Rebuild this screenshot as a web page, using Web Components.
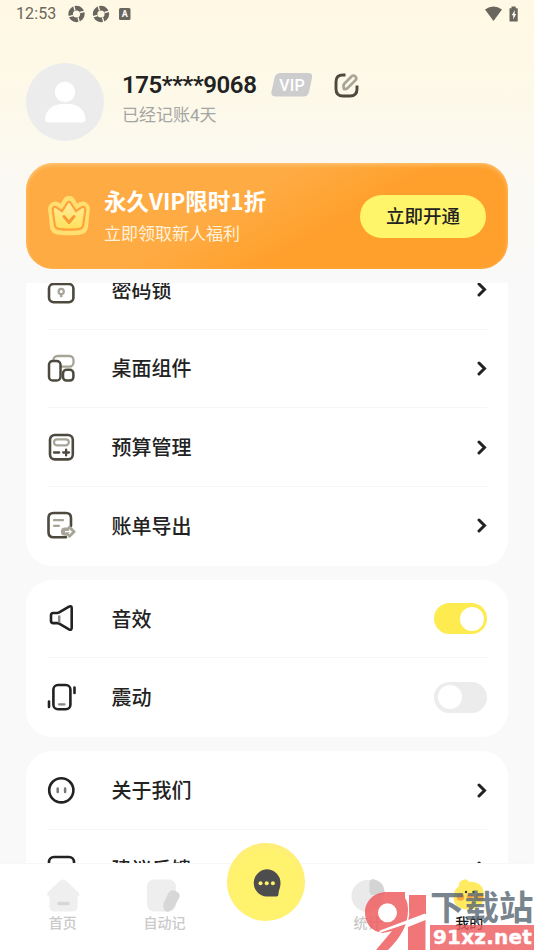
<!DOCTYPE html>
<html lang="zh-CN">
<head>
<meta charset="utf-8">
<title>我的</title>
<style>
html,body{margin:0;height:100%;overflow:hidden}
body{font-family:Roboto,"Noto Sans CJK SC",sans-serif;color:#222;background:#f9f9f9}
</style>
</head>
<body>
<profile-page></profile-page>
<script>
const define = (name, html) => customElements.define(name, class extends HTMLElement {
  constructor() {
    super();
    this.attachShadow({ mode: 'open' }).innerHTML = typeof html === 'function' ? html(this) : html;
  }
});

const D = '#4d493f', G = '#a7a498', K = '#222';
const icons = {
  lock: `<rect x="2" y="9" width="24.4" height="18.2" rx="4.6" fill="#fff" stroke="${D}" stroke-width="2.6"/><circle cx="14.200" cy="16.400" r="2.600" fill="none" stroke="${G}" stroke-width="2.200"/><path d="M14.200 19v3.200" stroke="${G}" stroke-width="2.600"/>`,
  widget: `<rect x="6.500" y="2" width="20" height="10.600" rx="4" fill="none" stroke="${G}" stroke-width="2.300"/><rect x="2" y="7" width="11.500" height="19.600" rx="3.800" fill="#fff" stroke="${D}" stroke-width="2.500"/><rect x="16" y="15.800" width="10.400" height="10.800" rx="3.600" fill="#fff" stroke="${D}" stroke-width="2.500"/>`,
  calc: `<rect x="3" y="2" width="22.800" height="24.400" rx="4.800" fill="none" stroke="${D}" stroke-width="2.600"/><rect x="7" y="6.300" width="14.800" height="6" rx="3" fill="none" stroke="${G}" stroke-width="2.200"/><path d="M7 19.500h5.200M16.200 19.500h5.800M19.100 16.600v5.800" stroke="${D}" stroke-width="2.300" stroke-linecap="round"/>`,
  export: `<path d="M24 15V7q0-5-5-5H6.500Q1.500 2 1.500 7v14.200q0 5 5 5H19" fill="none" stroke="${D}" stroke-width="2.600" stroke-linecap="round"/><path d="M7 9.200h9M7 14.800h5" stroke="${G}" stroke-width="2.200" stroke-linecap="round"/><path d="M22.500 15.800l5 4.900-5 4.900-1.500-1.900H18a3 3 0 0 1 0-6h3z" fill="${G}" stroke="${G}" stroke-width="2.200" stroke-linejoin="round"/><path d="M18 20.700h6M22 18.700l2.200 2-2.200 2" fill="none" stroke="#fff" stroke-width="1.300"/>`,
  sound: `<path d="M4 11.200Q4 9 6.200 9h4q1 0 2-.6L22 2.700q2.700-1.400 2.700 1.500v19.600q0 2.900-2.700 1.500L12.200 19.700q-1-.6-2-.6h-4Q4 19.100 4 17z" fill="none" stroke="${K}" stroke-width="2.600" stroke-linejoin="round"/><path d="M12.200 11.500v7" stroke="#888" stroke-width="2.500"/>`,
  shake: `<rect x="6.400" y="2" width="17" height="24.300" rx="4.600" fill="none" stroke="${K}" stroke-width="2.600"/><path d="M12 21.300h5.500" stroke="#888" stroke-width="2.200" stroke-linecap="round"/><path d="M2 18.500v5.500M27.500 4.500v5.500" stroke="${K}" stroke-width="2.600" stroke-linecap="round"/>`,
  about: `<circle cx="14.300" cy="14.300" r="12.100" fill="none" stroke="${K}" stroke-width="2.600"/><path d="M10.700 12.500v3.600M18.100 12.500v3.600" stroke="#777" stroke-width="2.500" stroke-linecap="round"/>`,
  feedback: `<rect x="2" y="3" width="25" height="23" rx="5" fill="none" stroke="${K}" stroke-width="2.600"/>`
};
define('row-icon', el => `<style>:host{display:block;width:29px;height:29px}svg{display:block}</style>
<svg width="29" height="29" viewBox="0 0 29 29">${icons[el.getAttribute('name')]}</svg>`);

define('chevron-icon', `<style>:host{display:block;width:10px;height:15px}svg{display:block}</style>
<svg width="10" height="15"><path d="M2 2L7.500 7.500 2 13" fill="none" stroke="#222" stroke-width="3" stroke-linecap="round" stroke-linejoin="miter"/></svg>`);

define('toggle-switch', `<style>
:host{display:flex;box-sizing:border-box;width:53px;height:31px;border-radius:16px;padding:3.500px;background:#ececec}
:host([on]){background:#fdeb50;justify-content:flex-end}
i{width:24px;height:24px;border-radius:50%;background:#fff}
</style><i></i>`);

define('setting-row', el => `<style>
:host{display:flex;align-items:center;height:78.700px;box-sizing:border-box;border-bottom:1.500px solid #f5f5f5}
:host(:last-child){border-bottom-color:transparent}
span{flex:1;margin-left:35.500px;padding-top:2px;font-size:20px;line-height:30px;font-weight:500}
row-icon{flex:none}
</style><row-icon name="${el.getAttribute('icon')}"></row-icon><span><slot></slot></span><slot name="end"><chevron-icon></chevron-icon></slot>`);

define('setting-card', `<style>
:host{display:block;flex:none;background:#fff;border-radius:26px;padding:0 21px}
</style><slot></slot>`);

define('status-bar', `<style>
:host{display:flex;height:27px;align-items:center;padding:0 15px 0 16px;color:#69665d;font-size:16px;letter-spacing:.1px;box-sizing:border-box}
.s{flex:1}svg{display:block;flex:none}
</style><span style="width:40px">12:53</span>
<svg style="margin-left:11.500px" width="42" height="18">
<g id="a" fill="none" stroke="#69665d"><circle cx="8.500" cy="9" r="5.900" stroke-width="4.600"/><path d="M5.500 0l1.500 5.500M17.500 6l-5.500 1.500M11.500 18L10 12.500M-.5 12L5 10.500" stroke="#fef9e5" stroke-width="1.300"/></g><use href="#a" x="24.500"/></svg>
<svg style="margin-left:9.500px" width="12" height="13"><rect y="1" width="11.500" height="12" rx="1.500" fill="#69665d"/><text x="5.700" y="10.300" text-anchor="middle" font-family="Roboto" font-weight="bold" font-size="9" letter-spacing="0" fill="#fff">A</text></svg>
<span class="s"></span>
<svg width="34" height="18"><path d="M0 4.500Q8.500-1.500 17 4.500L8.500 16z" fill="#69665d"/><path d="M24.500 3.300h2V1.500h4.200v1.800h2v13.200h-8.200z" fill="#69665d"/><path d="M29.800 5l-3 5.300h1.500v4.200l2.800-5.500h-1.500z" fill="#fff"/></svg>`);

define('user-header', `<style>
:host{display:flex;height:78px;margin:36px 26px 0;align-items:flex-start}
.av{width:78px;height:78px;border-radius:50%;background:#ececec;flex:none}
.t{margin:7px 0 0 18px}
.n{display:flex;align-items:center;height:30px;font-size:24px;font-weight:600}
.n span{width:135px;letter-spacing:-.420px;white-space:nowrap}
.vip{margin-left:13.500px}.ed{margin-left:20px}
.d{font-size:17px;line-height:24px;margin-top:2.500px;color:#a5a5a3}
svg{display:block;flex:none}
</style>
<svg class="av" viewBox="0 0 78 78"><circle cx="39" cy="29" r="10.200" fill="#fff"/><path d="M19 55.500C20 46 28 41 36 41h7c8 0 15.500 5 16.500 14.500q.2 4-3.500 4H22.500q-3.800 0-3.500-4z" fill="#fff"/></svg>
<div class="t"><div class="n"><span>175****9068</span>
<svg class="vip" width="43" height="24"><path d="M10 0H37q5 0 4 5l-3 14q-1 4.500-6 4.500H4.500q-5 0-4-5l3-13.500Q4.500 0 10 0z" fill="#cdcdcd"/><text x="21" y="17.500" text-anchor="middle" font-family="Roboto" font-weight="500" font-size="16" letter-spacing=".2" fill="#fff">VIP</text></svg>
<svg class="ed" width="26" height="25"><path d="M11.500 2H9Q2 2 2 9v7q0 7 7 7h7q7 0 7-7v-3.500" fill="none" stroke="#4d493f" stroke-width="2.900"/><path d="M10 16q-1.300-3.500.5-5.500l7-7c1.500-1.400 3-1.200 4 0s1 2.700-.2 3.900l-7 7Q12.500 16.500 10 16z" fill="none" stroke="#a7a498" stroke-width="2.700"/></svg>
</div><div class="d">已经记账4天</div></div>`);

define('vip-banner', `<style>
:host{display:flex;align-items:center;box-sizing:border-box;height:106px;margin:22px 26px 0;border-radius:27px;padding:0 22px 0 20.500px;background:linear-gradient(150deg,#ffab43 0%,#ffab43 42%,#ffa02d 62%,#ffa02d);box-shadow:inset 0 2px 4px rgba(255,226,170,.5)}
.t{flex:1;margin-left:13.500px;color:#fff}
h2{margin:-2px 0 0;font-family:"Noto Sans CJK SC",sans-serif;font-size:22.500px;line-height:34px;font-weight:700;white-space:nowrap}
p{margin:3.500px 0 0;font-size:17px;line-height:26px;color:#fff2dc}
b{width:126px;height:43px;border-radius:22px;background:#fff56b;color:#222;font-weight:500;font-size:18.500px;line-height:44.500px;text-align:center}
svg{flex:none}
</style>
<svg width="44" height="40" viewBox="0 0 44 40"><defs><linearGradient id="c" x2="0" y2="1"><stop stop-color="#ffed9c"/><stop offset="1" stop-color="#ffe05a"/></linearGradient></defs>
<path d="M3.700 14C3 9.500 8 6.500 11 9l3.500 2.500 4-7c1.500-3 5.500-3 7 0l4 7L33 9c3-2.500 8 .5 7.300 5l-1.800 17c-.5 4-3 5-6.500 5.300q-10 1-20 0c-3.500-.3-6-1.300-6.500-5.300z" fill="url(#c)" stroke="#ffdf70" stroke-width="5" stroke-linejoin="round"/>
<path d="M5.800 14.500C5.300 10.800 8 10 10.300 12l4.700 3.200L20.200 7c.8-1.700 2.800-1.700 3.600 0L29 15.200l4.700-3.200c2.300-2 5-1.200 4.500 2.500l-2 14.500c-.4 3-2 3.900-4.700 4.100q-9.500 1-19 0c-2.700-.2-4.300-1.100-4.700-4.100z" fill="url(#c)" stroke="#ffa33a" stroke-width="2.200"/>
<path d="M17 20.500l5 6 5-6" fill="none" stroke="#f79b34" stroke-width="3" stroke-linecap="round" stroke-linejoin="round"/></svg>
<div class="t"><h2>永久VIP限时1折</h2><p>立即领取新人福利</p></div><b>立即开通</b>`);

const pics = {
  home: `<path d="M3 14L15 2.800q3-2.400 6 0L33 14q3 3-.5 5v9.500q0 5-5 5h-18q-5 0-5-5V19Q.5 17 3 14z" fill="#efefef"/><path d="M14 25.500h9" stroke="#d7d7d7" stroke-width="3.600" stroke-linecap="round"/>`,
  note: `<rect x="1" y="1.500" width="29" height="32" rx="7" fill="#eee"/><path d="M23 14q3-3 6.500-1l2 1.200q3.200 2 1.700 5.500l-6 11-4.700 3q-3.500.3-4.500-1.700-1-3-.5-7z" fill="#d7d7d7"/>`,
  stat: `<circle cx="17.500" cy="18" r="16" fill="#eaeaea"/><path d="M19.500 5q0-4.500 4.500-3.700 9.500 2.500 10.500 12 0 4-4 4h-7q-4 0-4-4z" fill="#d4d4d4"/>`,
  duck: `<path d="M10 3q5-4 8 .8 15-.5 15 14.200 0 13-15 13.500-15 0-15.500-12-.3-7 5.500-11.500Q7 5 10 3z" fill="#ffea60"/><circle cx="9.500" cy="19" r="3.800" fill="#fba840"/><circle cx="28.500" cy="19" r="3.800" fill="#fba840"/><circle cx="15" cy="14" r="1.200" fill="#333"/><circle cx="22.500" cy="14" r="1.200" fill="#333"/><path d="M15 18q4-3 8 0-4 5-8 0z" fill="#ff9e38"/>`
};
define('nav-item', el => `<style>
:host{display:flex;flex-direction:column;align-items:center;flex:1;color:#c9c9c9;font-size:14px;line-height:20px;padding-top:13.500px}
:host([active]){color:#111}
svg{display:block}span{font-weight:500;margin-top:-.5px}
</style><svg width="36" height="36">${pics[el.getAttribute('icon')]}</svg><span><slot></slot></span>`);

define('chat-button', `<style>
:host{display:block;flex:none;width:78px;height:78px;margin:-21px 11.800px 0;border-radius:50%;background:#fff36e;box-shadow:inset 0 3px 6px rgba(255,235,130,.8)}
svg{display:block}
</style><svg width="78" height="78"><path d="M39.500 26.300a14 13.800 0 0 1 14 13.800c0 5-1.800 6.500-2 11.200q0 2.300-2.300 2.300H39.500a14 13.700 0 0 1 0-27.300z" fill="#4d4d4d"/><circle cx="33.500" cy="40.200" r="2" fill="#fff36e"/><circle cx="39.700" cy="40.200" r="2" fill="#fff36e"/><circle cx="45.900" cy="40.200" r="2" fill="#fff36e"/></svg>`);

define('tab-bar', `<style>
:host{display:flex;align-items:flex-start;height:87px;box-sizing:border-box;padding:0 14px 0 12px;background:#fff;border-top:1.500px solid #f7f7f7}
</style><nav-item icon="home">首页</nav-item><nav-item icon="note">自动记</nav-item><chat-button></chat-button><nav-item icon="stat">统计</nav-item><nav-item icon="duck" active>我的</nav-item>`);

define('site-mark', `<style>
:host{display:flex;position:absolute;right:0;bottom:0;width:170px;height:60px;pointer-events:none;overflow:hidden}
svg{flex:none;display:block}
.r{flex:1;display:flex;flex-direction:column;width:104px;margin-left:-1px}
.c{height:35px;font:700 34.500px/30px "Noto Sans CJK SC",sans-serif;color:rgba(90,104,116,.82);white-space:nowrap}
.u{height:25px;box-sizing:border-box;background:rgba(238,93,95,.82);color:#fff;font:700 20px/24px "DejaVu Sans",sans-serif;-webkit-text-stroke:.4px #fff;padding-left:3px;letter-spacing:.2px;white-space:nowrap}
</style>
<svg width="67" height="60" viewBox="0 0 67 60"><g fill="#ee5d5f" opacity=".84">
<path fill-rule="evenodd" d="M23 2h18v6q3 4 3 12c0 16-8 28-20 40H12l16-19-9 2C8 42 1 34 1 22.500 1 11 10 2 23 2zM23.500 13.300a9.500 9.500 0 1 0 0 19 9.500 9.500 0 0 0 0-19z"/>
<path d="M45 5h17v19L44 31q2-6 1-12z"/><path d="M61.500 30v30H44V37z"/></g><path d="M16 40.500L61 23.500v4L14 43.500z" fill="#fff"/></svg>
<div class="r"><div class="c">下载站</div><div class="u">91xz.net</div></div>`);

define('profile-page', `<style>
:host{position:relative;display:flex;flex-direction:column;width:534px;height:950px;overflow:hidden;background:linear-gradient(#fff8e4 0,#fef9e6 50px,#fdf9ea 110px,#fbf9f2 170px,#f9f9f9 283px)}
header{height:283px;flex:none}
main{flex:1;min-height:0;overflow:hidden;display:flex;flex-direction:column;gap:14.200px;padding:0 26px}
setting-card:first-child{margin-top:-32.200px}
tab-bar{flex:none}
</style>
<header><status-bar></status-bar><user-header></user-header><vip-banner></vip-banner></header>
<main>
<setting-card><setting-row icon="lock">密码锁</setting-row><setting-row icon="widget">桌面组件</setting-row><setting-row icon="calc">预算管理</setting-row><setting-row icon="export">账单导出</setting-row></setting-card>
<setting-card><setting-row icon="sound">音效<toggle-switch slot="end" on></toggle-switch></setting-row><setting-row icon="shake">震动<toggle-switch slot="end"></toggle-switch></setting-row></setting-card>
<setting-card><setting-row icon="about">关于我们</setting-row><setting-row icon="feedback">建议反馈</setting-row></setting-card>
</main>
<tab-bar></tab-bar>
<site-mark></site-mark>`);
</script>
</body>
</html>
